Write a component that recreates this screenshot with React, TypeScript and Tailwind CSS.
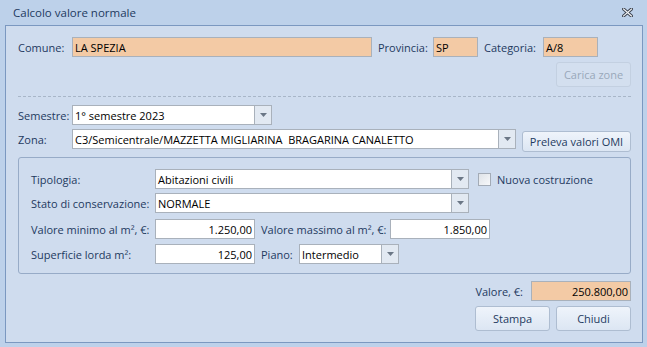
import React from 'react';

const labelCls = "text-[#1e3a5f] whitespace-nowrap";
const peachInput = "h-[20px] bg-[#f3caa5] border border-[#a9b1bb] pl-[2px] flex items-center text-black";

const Arrow = () => (
  <svg width="7" height="4" viewBox="0 0 7 4">
    <path d="M0 0 H7 L3.5 4 Z" fill="#6b7786" />
  </svg>
);

const Combo: React.FC<{ value: string; width: string }> = ({ value, width }) => (
  <div className={`${width} h-[20px] flex border border-[#a9b1bb] bg-white`}>
    <div className="flex-1 flex items-center pl-[2px] text-black whitespace-pre overflow-hidden">{value}</div>
    <div className="w-[17px] flex items-center justify-center border-l border-[#a9b1bb] bg-[#e2e9f2]">
      <Arrow />
    </div>
  </div>
);

const NumInput: React.FC<{ value: string }> = ({ value }) => (
  <div className="w-[100px] h-[20px] border border-[#a9b1bb] bg-white flex items-center justify-end pr-[2px] text-black">
    {value}
  </div>
);

const Button: React.FC<{ label: string; className?: string; disabled?: boolean }> = ({ label, className = '', disabled }) => (
  <div
    className={`flex items-center justify-center rounded-[3px] border ${
      disabled
        ? 'border-[#c3d0e1] text-[#99a8ba] bg-[#d3dfef]'
        : 'border-[#aebdd1] text-[#1e3a5f] bg-gradient-to-b from-[#eff4fb] to-[#dce6f3]'
    } ${className}`}
  >
    {label}
  </div>
);

export default function App() {
  return (
    <div className="w-[647px] h-[347px] bg-[#bdd1ea] flex flex-col font-['Segoe_UI','Open_Sans',sans-serif] text-[11px] leading-none select-none">
      {/* title bar */}
      <div className="h-[25px] flex items-center justify-between pl-[13px] pr-[14px]">
        <span className="text-[#1e3a5f] text-[11.5px]">Calcolo valore normale</span>
        <svg width="11" height="9" viewBox="0 0 11 9">
          <path d="M1.5 1 L9.5 8 M9.5 1 L1.5 8" stroke="#3e4552" strokeWidth="3.2" strokeLinecap="square" />
          <path d="M1.5 1 L9.5 8 M9.5 1 L1.5 8" stroke="#f4f6f9" strokeWidth="1.2" strokeLinecap="square" />
        </svg>
      </div>

      {/* client area */}
      <div className="ml-[5px] mr-[4px] h-[318px] border border-[#7b98c0] bg-[#cfdcee] pl-[12px] pr-[11px] pt-[11px] flex flex-col">
        <div className="flex items-center h-[20px]">
          <span className={`${labelCls} w-[54px]`}>Comune:</span>
          <div className={`${peachInput} w-[300px]`}>LA SPEZIA</div>
          <span className={`${labelCls} ml-[6px] w-[55px]`}>Provincia:</span>
          <div className={`${peachInput} w-[45px]`}>SP</div>
          <span className={`${labelCls} ml-[6px] w-[59px]`}>Categoria:</span>
          <div className={`${peachInput} w-[55px]`}>A/8</div>
        </div>

        <div className="flex justify-end mt-[5px]">
          <Button label="Carica zone" disabled className="w-[75px] h-[25px]" />
        </div>

        <div className="mt-[9px] border-t border-dashed border-[#a8b6c8]" />

        <div className="flex items-center mt-[8px]">
          <span className={`${labelCls} w-[54px]`}>Semestre:</span>
          <Combo value="1° semestre 2023" width="w-[200px]" />
        </div>

        <div className="flex items-start h-[20px] mt-[4px]">
          <span className={`${labelCls} w-[54px] self-center`}>Zona:</span>
          <Combo value="C3/Semicentrale/MAZZETTA MIGLIARINA  BRAGARINA CANALETTO" width="w-[444px]" />
          <Button label="Preleva valori OMI" className="ml-[6px] w-[109px] h-[21px] mt-[2px]" />
        </div>

        {/* group box */}
        <div className="mt-[8px] h-[117px] border border-[#97abc7] rounded-[3px] pl-[12px] pt-[11px] flex flex-col">
          <div className="flex items-center">
            <span className={`${labelCls} w-[124px]`}>Tipologia:</span>
            <Combo value="Abitazioni civili" width="w-[314px]" />
            <div className="ml-[9px] w-[13px] h-[13px] border border-[#a3abb6] bg-gradient-to-br from-[#dfe3e8] to-[#f7f8fa]" />
            <span className={`${labelCls} ml-[6px]`}>Nuova costruzione</span>
          </div>
          <div className="flex items-center mt-[4px]">
            <span className={`${labelCls} w-[124px]`}>Stato di conservazione:</span>
            <Combo value="NORMALE" width="w-[314px]" />
          </div>
          <div className="flex items-center mt-[6px]">
            <span className={`${labelCls} w-[124px]`}>Valore minimo al m², €:</span>
            <NumInput value="1.250,00" />
            <span className={`${labelCls} ml-[6px] w-[129px]`}>Valore massimo al m², €:</span>
            <NumInput value="1.850,00" />
          </div>
          <div className="flex items-center mt-[5px]">
            <span className={`${labelCls} w-[124px]`}>Superficie lorda m²:</span>
            <NumInput value="125,00" />
            <span className={`${labelCls} ml-[6px] w-[38px]`}>Piano:</span>
            <Combo value="Intermedio" width="w-[100px]" />
          </div>
        </div>

        <div className="flex items-center justify-end mt-[7px]">
          <span className={`${labelCls} mr-[8px]`}>Valore, €:</span>
          <div className="w-[100px] h-[20px] bg-[#f3caa5] border border-[#a9b1bb] flex items-center justify-end pr-[2px] text-black">
            250.800,00
          </div>
        </div>

        <div className="flex justify-end gap-[6px] mt-[5px]">
          <Button label="Stampa" className="w-[75px] h-[25px]" />
          <Button label="Chiudi" className="w-[75px] h-[25px]" />
        </div>
      </div>
    </div>
  );
}
